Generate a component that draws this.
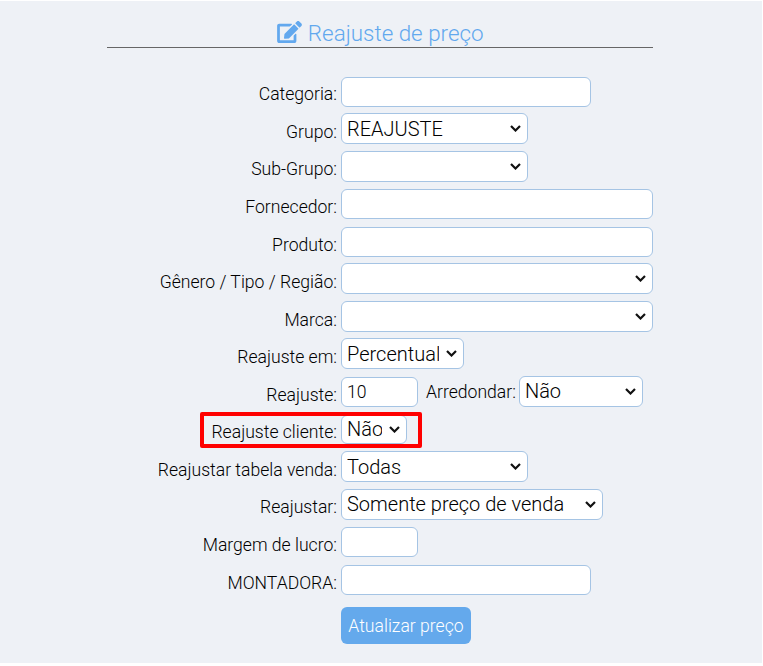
<div class="page">
  <div class="panel">
    <h1 class="title">
      <svg class="icon" viewBox="0 0 576 512" aria-hidden="true"><path fill="currentColor" d="M402.6 83.2l90.2 90.2c3.8 3.8 3.8 10 0 13.8L274.4 405.6l-92.8 10.3c-12.4 1.4-22.9-9.1-21.5-21.5l10.3-92.8L388.8 83.2c3.8-3.8 10-3.8 13.8 0zm162-22.9l-48.8-48.8c-15.2-15.2-39.9-15.2-55.2 0l-35.4 35.4c-3.8 3.8-3.8 10 0 13.8l90.2 90.2c3.8 3.8 10 3.8 13.8 0l35.4-35.4c15.2-15.3 15.2-40 0-55.2zM384 346.2V448H64V128h229.8c3.2 0 6.2-1.3 8.5-3.5l40-40c7.6-7.6 2.2-20.5-8.5-20.5H48C21.5 64 0 85.5 0 112v352c0 26.5 21.5 48 48 48h352c26.5 0 48-21.5 48-48V306.2c0-10.7-12.9-16-20.5-8.5l-40 40c-2.2 2.3-3.5 5.3-3.5 8.5z"/></svg>
      Reajuste de preço
    </h1>
    <form class="form">
      <label class="lab" for="f1">Categoria:</label>
      <div class="ctl"><input id="f1" class="w250" /></div>

      <label class="lab" for="f2">Grupo:</label>
      <div class="ctl"><select id="f2" class="w187"><option>REAJUSTE</option></select></div>

      <label class="lab" for="f3">Sub-Grupo:</label>
      <div class="ctl"><select id="f3" class="w187"><option></option></select></div>

      <label class="lab" for="f4">Fornecedor:</label>
      <div class="ctl"><input id="f4" class="w312" /></div>

      <label class="lab" for="f5">Produto:</label>
      <div class="ctl"><input id="f5" class="w312" /></div>

      <label class="lab" for="f6">Gênero / Tipo / Região:</label>
      <div class="ctl"><select id="f6" class="w312"><option></option></select></div>

      <label class="lab" for="f7">Marca:</label>
      <div class="ctl"><select id="f7" class="w312"><option></option></select></div>

      <label class="lab" for="f8">Reajuste em:</label>
      <div class="ctl"><select id="f8" class="w123"><option>Percentual</option></select></div>

      <label class="lab" for="f9">Reajuste:</label>
      <div class="ctl">
        <input id="f9" class="w77" value="10" />
        <label class="lab inline" for="f10">Arredondar:</label>
        <select id="f10" class="w124"><option>Não</option></select>
      </div>

      <label class="lab" for="f11">Reajuste cliente:</label>
      <div class="ctl"><select id="f11" class="short"><option>Não</option></select></div>

      <label class="lab" for="f12">Reajustar tabela venda:</label>
      <div class="ctl"><select id="f12" class="w187"><option>Todas</option></select></div>

      <label class="lab" for="f13">Reajustar:</label>
      <div class="ctl"><select id="f13" class="w262"><option>Somente preço de venda</option></select></div>

      <label class="lab" for="f14">Margem de lucro:</label>
      <div class="ctl"><input id="f14" class="w77" /></div>

      <label class="lab" for="f15">MONTADORA:</label>
      <div class="ctl"><input id="f15" class="w250" /></div>

      <div class="btnrow"><button type="button" class="btn">Atualizar preço</button></div>

      <div class="mark"></div>
    </form>
  </div>
</div>

<style>
  :global(body) {
    margin: 0;
    background: #fff;
  }
  .page {
    width: 762px;
    height: 662px;
    margin-top: 1px;
    background: #eef1f6;
    box-sizing: border-box;
    padding: 0 109px 0 107px;
    font-family: Roboto, sans-serif;
    font-weight: 300;
    color: #000;
  }
  .panel {
    display: flex;
    flex-direction: column;
  }
  .title {
    margin: 0;
    height: 47px;
    box-sizing: border-box;
    padding-top: 19px;
    text-align: center;
    font-size: 22.4px;
    line-height: 26px;
    font-weight: 300;
    color: #62a8ee;
    border-bottom: 1px solid #666;
  }
  .icon {
    width: 25px;
    height: 22px;
    vertical-align: -2px;
    margin-left: 1px;
  }
  .form {
    position: relative;
    display: grid;
    grid-template-columns: 230px 312px;
    column-gap: 4px;
    grid-auto-rows: 37.55px;
    padding-top: 28.6px;
  }
  .lab {
    text-align: right;
    font-size: 17.6px;
    line-height: 20px;
    padding-top: 7.8px;
    white-space: nowrap;
    justify-self: end;
  }
  .lab.inline {
    padding-top: 0;
    margin: 5px 0 0 8px;
    justify-self: auto;
  }
  .ctl {
    display: flex;
    align-items: flex-start;
  }
  input,
  select {
    box-sizing: border-box;
    height: 30px;
    border: 1px solid #a5c4e4;
    border-radius: 6px;
    background: #fff;
    font-family: Roboto, sans-serif;
    font-weight: 300;
    font-size: 17.6px;
    color: #000;
    padding: 0 5px;
    margin: 0;
    outline: none;
  }
  select {
    appearance: none;
    -webkit-appearance: none;
    height: 31px;
    margin-top: -1px;
    padding: 0 24px 0 5px;
    font-size: 20px;
    background: #fff url("data:image/svg+xml,%3Csvg xmlns='http://www.w3.org/2000/svg' viewBox='0 0 11 7'%3E%3Cpath d='M1 1l4.5 4.5L10 1' fill='none' stroke='%23111' stroke-width='2.2'/%3E%3C/svg%3E") no-repeat right 6px center / 11px 7px;
  }
  select.short {
    height: 29px;
    width: 66px;
    margin-top: 0;
    padding-bottom: 1px;
  }
  .w77 { width: 77px; }
  .w123 { width: 123px; }
  .w124 { width: 124px; }
  .w187 { width: 187px; }
  .w250 { width: 250px; }
  .w262 { width: 262px; }
  .w312 { width: 312px; }
  .inline + select { margin-left: 3px; }
  .btnrow {
    grid-column: 2;
    padding-top: 5px;
  }
  .btn {
    width: 130px;
    height: 37px;
    border: 0;
    border-radius: 6px;
    background: #64a9ec;
    color: #fff;
    font-family: Roboto, sans-serif;
    font-weight: 300;
    font-size: 17.6px;
    padding: 0;
  }
  .mark {
    position: absolute;
    left: 93px;
    top: 364px;
    width: 222px;
    height: 36px;
    box-sizing: border-box;
    border: 4px solid #f00;
    border-radius: 2px;
    pointer-events: none;
  }
</style>
